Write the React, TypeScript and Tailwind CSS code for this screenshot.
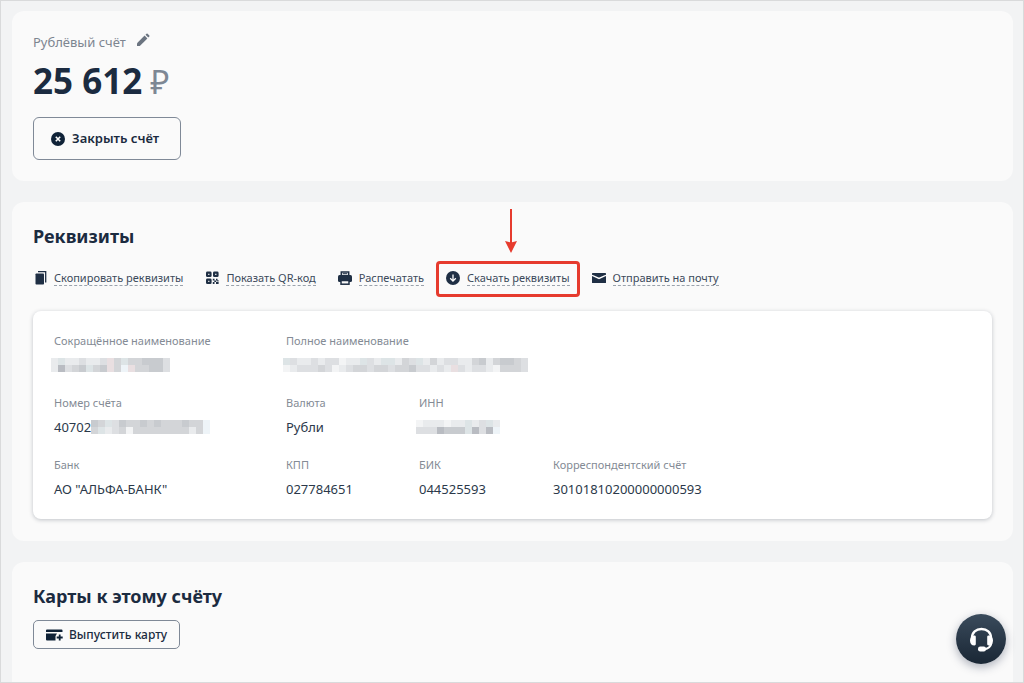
import type { ReactNode } from "react";

const mosaicTints: Record<string, string> = {
  a: "#f3f4f5",
  b: "#e9ebed",
  c: "#dddfe2",
  d: "#d3d5d8",
  e: "#c8cbcf",
  f: "#b9bcc2",
  g: "#dde4e6",
  h: "#e9dfe1",
  i: "#eef4f8",
};

function Mosaic({ rows }: { rows: string[] }) {
  return (
    <span className="inline-block align-middle" aria-hidden="true">
      {rows.map((row, r) => (
        <span key={r} className="flex">
          {row.split("").map((tint, c) => (
            <span key={c} className="h-[7px] w-[7px]" style={{ backgroundColor: mosaicTints[tint] }} />
          ))}
        </span>
      ))}
    </span>
  );
}

function PencilIcon() {
  return (
    <svg width="14" height="14" viewBox="0 0 14 14" fill="#6b7480" aria-hidden="true">
      <path d="M1 13v-2.8l7.6-7.6 2.8 2.8L3.800 13z" />
      <path d="M9.500 1.700l1-1a.8.800 0 0 1 1.100 0l1.700 1.700a.8.800 0 0 1 0 1.100l-1 1z" />
    </svg>
  );
}

function CloseIcon() {
  return (
    <svg width="14" height="14" viewBox="0 0 14 14" aria-hidden="true">
      <circle cx="7" cy="7" r="7" fill="#0f2237" />
      <path d="M4.800 4.800l4.400 4.400M9.200 4.800L4.800 9.200" stroke="#fff" strokeWidth="1.600" />
    </svg>
  );
}

function CopyIcon() {
  return (
    <svg width="14" height="14" viewBox="0 0 14 14" aria-hidden="true">
      <rect x="2.500" y="2.500" width="8.500" height="11" rx="0.800" fill="#1f2f44" />
      <path d="M5 0.700h7.700v10.800" fill="none" stroke="#1f2f44" strokeWidth="1.300" />
    </svg>
  );
}

function QrIcon() {
  return (
    <svg width="14" height="14" viewBox="0 0 14 14" fill="none" stroke="#1f2f44" aria-hidden="true">
      <g strokeWidth="2.200">
        <rect x="2.100" y="1.600" width="3.400" height="3.400" rx="0.300" />
        <rect x="9.100" y="1.600" width="3.400" height="3.400" rx="0.300" />
        <rect x="2.100" y="8.600" width="3.400" height="3.400" rx="0.300" />
      </g>
      <path
        d="M7.800 7.800h1.700v1.600h-1.700zM11 7.800h1.500v1.600h-1.500zM12.200 9.300h1.400v1.200h-1.400zM9.300 9.400h1.900v1.700h-1.900zM7.800 11.100h1.700v2h-1.700zM11 11.100h2.600v1.800h-2.600z"
        fill="#1f2f44"
        stroke="none"
      />
    </svg>
  );
}

function PrinterIcon() {
  return (
    <svg width="14" height="14" viewBox="0 0 14 14" aria-hidden="true">
      <path d="M3.300 4.500V0.900h7.400v3.600" fill="#e7e9ec" stroke="#1f2f44" strokeWidth="1.500" />
      <path d="M4.800 2.700h4.400" stroke="#1f2f44" />
      <rect y="4" width="14" height="7" rx="1.500" fill="#1f2f44" />
      <rect x="3" y="9.500" width="8" height="3.700" fill="#fafafa" stroke="#1f2f44" strokeWidth="1.500" />
    </svg>
  );
}

function DownloadIcon() {
  return (
    <svg width="14" height="14" viewBox="0 0 14 14" aria-hidden="true">
      <circle cx="7" cy="7" r="7" fill="#1f2f44" />
      <path d="M7 3.500v6.500M4.200 7.300L7 10.100l2.800-2.800" fill="none" stroke="#fff" strokeWidth="1.300" />
    </svg>
  );
}

function MailIcon() {
  return (
    <svg width="14" height="14" viewBox="0 0 14 14" aria-hidden="true">
      <rect y="2" width="14" height="10" rx="0.600" fill="#1f2f44" />
      <path d="M0 4.300l7 3.200 7-3.200" fill="none" stroke="#fff" strokeWidth="1.400" />
    </svg>
  );
}

function CardIcon() {
  return (
    <svg width="17" height="12" viewBox="0 0 17 12" aria-hidden="true">
      <path d="M1 0.500h14.500a1 1 0 0 1 1 1V3H0V1.500a1 1 0 0 1 1-1z" fill="#0f2237" />
      <path d="M0 4.500h11l-1.500 2.500v4.500H1a1 1 0 0 1-1-1z" fill="#0f2237" />
      <path d="M13.700 5.500v6M10.700 8.500h6" stroke="#0f2237" strokeWidth="1.800" />
    </svg>
  );
}

function HeadsetIcon() {
  return (
    <svg width="25" height="25" viewBox="0 0 25 25" fill="none" aria-hidden="true">
      <path d="M3 11C3 5.500 7 2 12.500 2S22 5.500 22 11" stroke="#fff" strokeWidth="2.400" />
      <path d="M5.500 8.500c.9 0 1.300.6 1.300 1.400v7.200c0 .9-.5 1.400-1.300 1.400C2.500 18.500 1 16.500 1 13.500s1.500-5 4.500-5z" fill="#fff" />
      <path d="M19.500 8.500c-.9 0-1.300.6-1.300 1.400v7.200c0 .9.500 1.400 1.300 1.400 3 0 4.500-2 4.500-5s-1.500-5-4.500-5z" fill="#fff" />
      <path d="M22.500 16c-.8 4-3.500 6-8 6.200" stroke="#fff" strokeWidth="2" />
      <rect x="9" y="19.500" width="8" height="5" rx="2.200" fill="#fff" />
    </svg>
  );
}

function Pointer() {
  return (
    <span className="pointer-events-none absolute -top-[9px] -right-[10px] -bottom-[11px] -left-[10px] rounded-[4px] border-[3px] border-[#e63b2e]">
      <svg
        className="absolute bottom-full left-[72px] mb-[11px] -translate-x-1/2"
        width="13"
        height="44"
        viewBox="0 0 13 44"
        aria-hidden="true"
      >
        <path d="M6.500 0v36" stroke="#e63b2e" strokeWidth="2" />
        <path d="M0.500 32l6 1.500 6-1.500-6 12z" fill="#e63b2e" />
      </svg>
    </span>
  );
}

function ActionLink({ icon, label, marked }: { icon: ReactNode; label: string; marked?: boolean }) {
  return (
    <a href="#" className="relative flex items-center gap-[7px] text-[11px] text-[#3c4a5b]">
      {icon}
      <span className="border-b border-dashed border-[#9aa2ac] leading-[15px]">{label}</span>
      {marked && <Pointer />}
    </a>
  );
}

function Field({ label, className, children }: { label: string; className?: string; children: ReactNode }) {
  return (
    <div className={className}>
      <dt className="text-[11px] leading-4 text-[#848b95]">{label}</dt>
      <dd className="mt-1.5 flex h-5 items-center text-[13px] leading-5 text-[#2b394a]">{children}</dd>
    </div>
  );
}

export default function App() {
  return (
    <div className="flex min-h-screen flex-col gap-[21px] border border-[#d9dadb] bg-[#f2f3f4] pt-2.5 pr-2.5 pl-[11px] font-['Noto_Sans',sans-serif] text-[#1b2b40]">
      <section className="rounded-xl bg-[#fafafa] px-[21px] pt-[21px] pb-[21px]">
        <div className="flex items-center gap-2.5">
          <span className="text-[13px] leading-5 text-[#7d8590]">Рублёвый счёт</span>
          <button type="button" aria-label="Переименовать счёт" className="pb-1">
            <PencilIcon />
          </button>
        </div>
        <p className="mt-[9px] flex items-baseline gap-2 text-[35px] leading-[40px] font-bold">
          <span>25 612</span>
          <span className="text-[33px] font-normal text-[#7d8794]">₽</span>
        </p>
        <button
          type="button"
          className="mt-[15px] flex h-[43px] items-center gap-[7px] rounded-md border border-[#7f8997] pr-[21px] pl-[17px] text-[13px] font-semibold"
        >
          <CloseIcon />
          Закрыть счёт
        </button>
      </section>

      <section className="rounded-xl bg-[#fafafa] px-[21px] pt-5 pb-[22px]">
        <h2 className="text-lg leading-7 font-bold">Реквизиты</h2>
        <div className="mt-5 flex items-center gap-[22px]">
          <ActionLink icon={<CopyIcon />} label="Скопировать реквизиты" />
          <ActionLink icon={<QrIcon />} label="Показать QR-код" />
          <ActionLink icon={<PrinterIcon />} label="Распечатать" />
          <ActionLink icon={<DownloadIcon />} label="Скачать реквизиты" marked />
          <ActionLink icon={<MailIcon />} label="Отправить на почту" />
        </div>
        <dl className="mt-[25px] grid grid-cols-[232px_133px_134px_1fr] gap-y-5 rounded-lg bg-white px-[21px] pt-[22px] pb-5 shadow-[0_1px_4px_rgba(20,30,50,0.25)]">
          <Field label="Сокращённое наименование">
            <span className="-ml-[3px] flex">
              <Mosaic rows={["bgbbcbbchdgddeeec", "bfcdegdehdihddeec"]} />
            </span>
          </Field>
          <Field label="Полное наименование" className="col-span-3">
            <span className="-ml-[3px] flex">
              <Mosaic rows={["gcbbcbccabbgcbggbdcgbdbccbbdebdeedc", "abcccdcabcddcddcddeccbcbhcbccbadddc"]} />
            </span>
          </Field>
          <Field label="Номер счёта">
            40702
            <Mosaic rows={["edgceddededddeddi", "dgbcdaddddddddbdi"]} />
          </Field>
          <Field label="Валюта">Рубли</Field>
          <Field label="ИНН" className="col-span-2">
            <span className="-ml-[3px] flex">
              <Mosaic rows={["abbbabbgbcgb", "cccfeeegfcfi"]} />
            </span>
          </Field>
          <Field label="Банк">АО "АЛЬФА-БАНК"</Field>
          <Field label="КПП">027784651</Field>
          <Field label="БИК">044525593</Field>
          <Field label="Корреспондентский счёт">30101810200000000593</Field>
        </dl>
      </section>

      <section className="flex-1 rounded-t-xl bg-[#fafafa] px-[21px] pt-5 pb-8">
        <h2 className="text-lg leading-7 font-bold">Карты к этому счёту</h2>
        <button
          type="button"
          className="mt-2.5 flex h-[29px] items-center gap-1.5 rounded-[5px] border border-[#7f8997] px-3 text-xs font-medium"
        >
          <CardIcon />
          Выпустить карту
        </button>
      </section>

      <button
        type="button"
        aria-label="Поддержка"
        className="fixed right-[18px] bottom-[19px] flex size-[50px] items-center justify-center rounded-full bg-linear-to-b from-[#3a4b5c] to-[#1a2735] shadow-[0_3px_10px_rgba(30,40,70,0.35)]"
      >
        <HeadsetIcon />
      </button>
    </div>
  );
}
